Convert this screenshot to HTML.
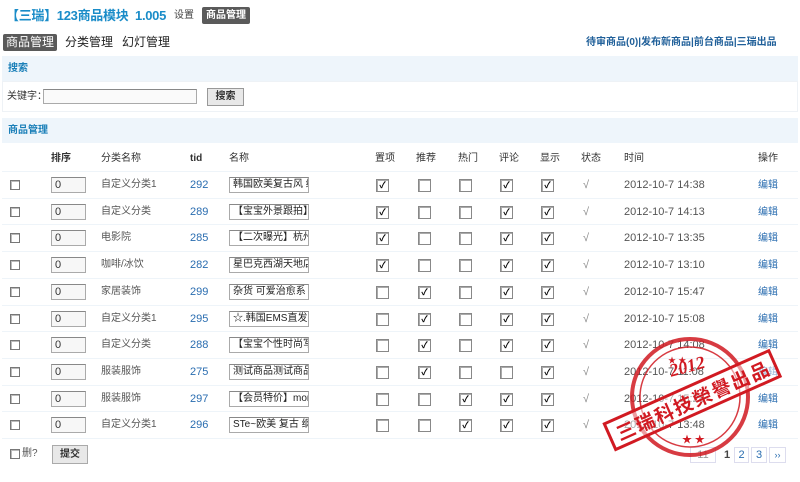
<!DOCTYPE html>
<html><head><meta charset="utf-8"><style>
*{margin:0;padding:0;box-sizing:border-box}
body{width:800px;height:482px;background:#fff;font-family:"Liberation Sans","Noto Sans CJK SC",sans-serif;font-size:11px;color:#333;position:relative;overflow:hidden}
.a{position:absolute;white-space:nowrap;line-height:13px}
.cb{position:absolute;width:10px;height:10px;border:1px solid #777;background:#fff;box-shadow:inset 1px 1px 0 #bbb}
.ck{position:absolute;width:13px;height:13px;border:1px solid #888;background:#fff;box-shadow:inset 1px 1px 0 #aaa;font-size:9px;line-height:11px;text-align:center;color:#000;font-weight:bold}
.in{position:absolute;height:16px;border:1px solid #aaa;border-top-color:#888;background:#fff;font-size:10px;line-height:14px;padding-left:3px;overflow:hidden;white-space:nowrap}
.bar{position:absolute;left:2px;width:796px;background:#eef5fb;color:#1a7fb8;font-weight:bold;font-size:10px;padding-left:6px}
.line{position:absolute;left:2px;width:796px;height:1px;background:#eef4f9}
.bl{color:#2a6db0}
.pg{position:absolute;top:447px;height:16px;border:1px solid #dde;text-align:center;line-height:14px;color:#2a6db0;font-size:11px}
</style></head><body>
<div class="a" style="left:6px;top:8px;font-size:13px;line-height:15px;font-weight:bold;color:#1a8cc8;letter-spacing:-0.3px">【三瑞】123商品模块&nbsp; 1.005</div>
<div class="a" style="left:174px;top:9px;font-size:10px;color:#444">设置</div>
<div class="a" style="left:202px;top:7px;background:#5a5a5a;color:#fff;font-size:10px;font-weight:bold;padding:2px 4px;border-radius:2px">商品管理</div>
<div class="a" style="left:3px;top:34px;background:#5a5a5a;color:#fff;font-size:12px;line-height:15px;padding:1px 3px;border-radius:2px">商品管理</div>
<div class="a" style="left:65px;top:35px;font-size:12px;line-height:15px;color:#222">分类管理</div>
<div class="a" style="left:122px;top:35px;font-size:12px;line-height:15px;color:#222">幻灯管理</div>
<div class="a" style="left:586px;top:36px;font-size:10px;font-weight:bold;color:#1f5f99">待审商品(0)|发布新商品|前台商品|三瑞出品</div>
<div class="bar" style="top:56px;height:25px;line-height:25px">搜索</div>
<div class="a" style="left:2px;top:81px;width:796px;height:31px;border:1px solid #eef2f6"></div>
<div class="a" style="left:7px;top:90px;font-size:10px">关键字：</div>
<div class="in" style="left:43px;top:89px;width:154px;height:15px;background:#fafafa"></div>
<div class="a" style="left:207px;top:88px;width:37px;height:18px;border:1px solid #999;background:#e8e8e8;font-size:10px;text-align:center;line-height:16px;font-weight:bold">搜索</div>
<div class="bar" style="top:118px;height:25px;line-height:25px">商品管理</div>
<div class="a" style="left:51px;top:152px;font-size:10px;font-weight:bold">排序</div>
<div class="a" style="left:101px;top:152px;font-size:10px">分类名称</div>
<div class="a" style="left:190px;top:152px;font-size:10px;font-weight:bold">tid</div>
<div class="a" style="left:229px;top:152px;font-size:10px">名称</div>
<div class="a" style="left:375px;top:152px;font-size:10px">置项</div>
<div class="a" style="left:416px;top:152px;font-size:10px">推荐</div>
<div class="a" style="left:458px;top:152px;font-size:10px">热门</div>
<div class="a" style="left:499px;top:152px;font-size:10px">评论</div>
<div class="a" style="left:540px;top:152px;font-size:10px">显示</div>
<div class="a" style="left:581px;top:152px;font-size:10px">状态</div>
<div class="a" style="left:624px;top:152px;font-size:10px">时间</div>
<div class="a" style="left:758px;top:152px;font-size:10px">操作</div>
<div id="rows"></div>
<div class="cb" style="left:10px;top:449px"></div>
<div class="a" style="left:22px;top:447px;font-size:10px;color:#555">删?</div>
<div class="a" style="left:52px;top:445px;width:36px;height:19px;border:1px solid #aaa;background:#e8e8e8;font-size:10px;text-align:center;line-height:17px;font-weight:bold">提交</div>
<div class="pg" style="left:690px;width:26px;color:#999">11</div>
<div class="a" style="left:724px;top:449px;font-size:11px;font-weight:bold;color:#444">1</div>
<div class="pg" style="left:734px;width:15px">2</div>
<div class="pg" style="left:751px;width:16px">3</div>
<div class="pg" style="left:769px;width:17px;font-size:9px">››</div>
<script>
var d=[["自定义分类1",292,"韩国欧美复古风 编",[1,0,0,1,1],"14:38"],["自定义分类",289,"【宝宝外景跟拍】套",[1,0,0,1,1],"14:13"],["电影院",285,"【二次曝光】杭州U",[1,0,0,1,1],"13:35"],["咖啡/冰饮",282,"星巴克西湖天地店★",[1,0,0,1,1],"13:10"],["家居装饰",299,"杂货 可爱治愈系 A",[0,1,0,1,1],"15:47"],["自定义分类1",295,"☆.韩国EMS直发▲",[0,1,0,1,1],"15:08"],["自定义分类",288,"【宝宝个性时尚写真",[0,1,0,1,1],"14:08"],["服装服饰",275,"测试商品测试商品测",[0,1,0,0,1],"11:08"],["服装服饰",297,"【会员特价】mon",[0,0,1,1,1],"15:28"],["自定义分类1",296,"STe~欧美 复古 纲",[0,0,1,1,1],"13:48"]];
var h="",cx=[376,418,459,500,541];
for(var i=0;i<10;i++){var y=Math.round(185+i*26.7),r=d[i];
h+='<div class="line" style="top:'+(y-14)+'px"></div>';
h+='<div class="cb" style="left:10px;top:'+(y-5)+'px"></div>';
h+='<div class="in" style="left:51px;top:'+(y-8)+'px;width:35px;background:#f7f7f7;color:#333;font-size:11px">0</div>';
h+='<div class="a" style="left:101px;top:'+(y-7)+'px;font-size:10px;color:#555">'+r[0]+'</div>';
h+='<div class="a bl" style="left:190px;top:'+(y-6)+'px;font-size:11px">'+r[1]+'</div>';
h+='<div class="in" style="left:229px;top:'+(y-8)+'px;width:80px;color:#222">'+r[2]+'</div>';
for(var j=0;j<5;j++)h+='<div class="ck" style="left:'+cx[j]+'px;top:'+(y-6)+'px">'+(r[3][j]?'✓':'')+'</div>';
h+='<div class="a" style="left:583px;top:'+(y-6)+'px;color:#888">√</div>';
h+='<div class="a" style="left:624px;top:'+(y-6)+'px;color:#555;font-size:11px">2012-10-7 '+r[4]+'</div>';
h+='<div class="a bl" style="left:758px;top:'+(y-6)+'px;font-size:10px">编辑</div>';}
h+='<div class="line" style="top:438px"></div>';
document.getElementById("rows").innerHTML=h;
</script>
<svg class="a" style="left:590px;top:325px" width="200" height="150" viewBox="0 0 200 150">
<g fill="none" stroke="#d11a22" opacity="0.85">
<circle cx="100" cy="72" r="58" stroke-width="4"/>
<circle cx="100" cy="72" r="50" stroke-width="1.5"/>
</g>
<text x="80" y="48" fill="#d11a22" font-family="Liberation Serif,serif" font-style="italic" font-weight="bold" font-size="18" transform="rotate(-15 95 45)">2012</text>
<g transform="rotate(-24 100 75)">
<rect x="12" y="62" width="180" height="28" fill="#fff" fill-opacity="0.5" stroke="#d11a22" stroke-width="3"/>
<text x="102" y="84" fill="#d11a22" font-family="Liberation Sans,'Noto Sans CJK TC',sans-serif" font-weight="bold" font-size="19" text-anchor="middle" textLength="165">三瑞科技榮譽出品</text>
</g>
<g fill="#d11a22"><text x="92" y="118" font-size="10">★ ★</text><text x="78" y="38" font-size="8">★ ★</text></g>
</svg>
</body></html>
